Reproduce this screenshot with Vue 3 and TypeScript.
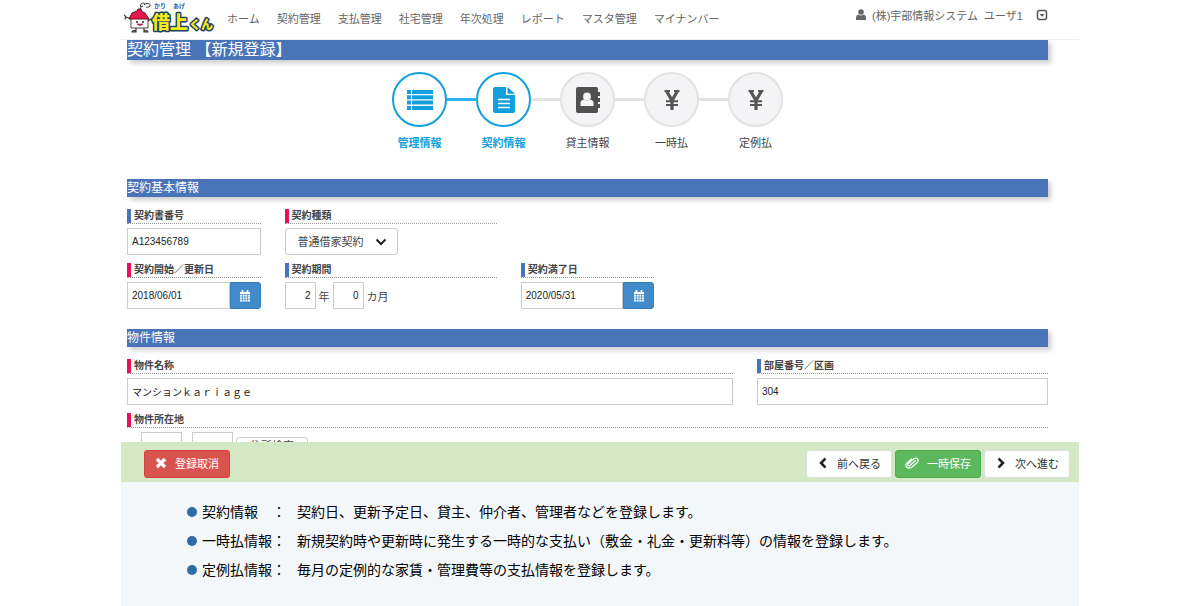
<script setup lang="ts">
import { ref } from 'vue'

interface Step {
  label: string
  icon: 'list' | 'file' | 'book' | 'yen'
  active: boolean
}

const menu: string[] = ['ホーム', '契約管理', '支払管理', '社宅管理', '年次処理', 'レポート', 'マスタ管理', 'マイナンバー']

const steps: Step[] = [
  { label: '管理情報', icon: 'list', active: true },
  { label: '契約情報', icon: 'file', active: true },
  { label: '貸主情報', icon: 'book', active: false },
  { label: '一時払', icon: 'yen', active: false },
  { label: '定例払', icon: 'yen', active: false },
]

const notes = [
  { term: '契約情報　：', text: '契約日、更新予定日、貸主、仲介者、管理者などを登録します。' },
  { term: '一時払情報：', text: '新規契約時や更新時に発生する一時的な支払い（敷金・礼金・更新料等）の情報を登録します。' },
  { term: '定例払情報：', text: '毎月の定例的な家賃・管理費等の支払情報を登録します。' },
]

const contractNo = ref('A123456789')
const contractType = ref('普通借家契約')
const startDate = ref('2018/06/01')
const years = ref('2')
const months = ref('0')
const endDate = ref('2020/05/31')
const propertyName = ref('マンションｋａｒｉａｇｅ')
const roomNo = ref('304')
const zipHead = ref('')
const zipTail = ref('')
</script>

<template>
  <div class="page">
    <div class="frame">
      <header class="header">
        <a href="#" class="logo" aria-label="借上くん">
          <svg width="92" height="34" viewBox="0 0 92 34">
            <path d="M17 6c-2-3 2-5 4-3M20 4c3-3 7-1 6 1s-4 1-4 1M19 5c-3 0-3 4-1 5" fill="none" stroke="#333" stroke-width="1" />
            <path d="M7 18L2 16M2 16l-2-2M2 16l-1 2M24 20l3-2" fill="none" stroke="#333" stroke-width="1.2" stroke-linecap="round" />
            <path d="M7 17h17v10H7z" fill="#fff" stroke="#444" stroke-width="1" />
            <path d="M5 18L8 12l5-2 1-2h3v2l4 2 4 6z" fill="#e5174f" stroke="#6b1020" stroke-width="1" />
            <circle cx="13" cy="21" r="1" fill="#222" />
            <circle cx="19" cy="21" r="1" fill="#222" />
            <path d="M13 23q3 3 6 0z" fill="#e5174f" stroke="#a01030" stroke-width=".6" />
            <path d="M12 27v3M20 27v3M8 31q0-2 4-1v1zM20 31v-1q4-1 4 1z" fill="#fff" stroke="#333" stroke-width="1.2" />
            <g class="logo-ruby">
              <text x="30" y="7">かり</text>
              <text x="49" y="7">あげ</text>
            </g>
            <g class="logo-word">
              <text x="28" y="28" font-size="18">借上</text>
              <text x="65" y="28" font-size="12">くん</text>
            </g>
          </svg>
        </a>
        <nav class="menu">
          <a v-for="item in menu" :key="item" href="#">{{ item }}</a>
        </nav>
        <div class="user">
          <svg width="10" height="12" viewBox="0 0 10 12"><circle cx="5" cy="3" r="2.8" fill="#666" /><path d="M0 11V8.500Q0 6 2.500 5.500Q5 7.500 7.500 5.500Q10 6 10 8.500V11z" fill="#666" /></svg>
          <span class="user-name">(株)宇部情報システム&nbsp; ユーザ1</span>
          <button type="button" class="user-toggle" aria-label="ユーザメニュー">
            <svg width="12" height="12" viewBox="0 0 12 12"><rect x="1.500" y="1.500" width="9" height="9" rx="2" fill="none" stroke="#555" stroke-width="1.500" /><path d="M3.500 5h5L6 7.800z" fill="#555" /></svg>
          </button>
        </div>
      </header>

      <main class="form">
        <h1 class="bar title">契約管理 【新規登録】</h1>

        <ol class="steps">
          <li v-for="step in steps" :key="step.label" class="step" :class="{ active: step.active }">
            <span class="disc">
              <svg v-if="step.icon === 'list'" width="26" height="20" viewBox="0 0 26 20" fill="#129fdc">
                <path d="M0 0h4v4H0zM5 0h21v4H5zM0 5.300h4v4H0zM5 5.300h21v4H5zM0 10.600h4v4H0zM5 10.600h21v4H5zM0 16h4v4H0zM5 16h21v4H5z" />
              </svg>
              <svg v-else-if="step.icon === 'file'" width="22" height="26" viewBox="0 0 22 26">
                <path d="M2 0h11v8h9v16q0 2-2 2H2q-2 0-2-2V2q0-2 2-2z" fill="#129fdc" />
                <path d="M14.500 0L22 6.800h-7.500z" fill="#129fdc" />
                <path d="M5 12.500h12M5 16.500h12M5 20.500h12" stroke="#fff" stroke-width="1.600" />
              </svg>
              <svg v-else-if="step.icon === 'book'" width="24" height="26" viewBox="0 0 24 26">
                <path d="M2 0h18q2 0 2 2v3h2v4h-2v2h2v4h-2v2h2v4h-2v3q0 2-2 2H2q-2 0-2-2V2q0-2 2-2z" fill="#505050" />
                <circle cx="11" cy="9.500" r="3.900" fill="#f4f4f7" />
                <path d="M4.500 19v-3q0-3 3.500-3.500Q11 14.500 14 12.500Q17.500 13 17.500 16v3z" fill="#f4f4f7" />
              </svg>
              <svg v-else width="16" height="20" viewBox="0 0 16 20">
                <path d="M2.500 1L8 10.500 13.500 1M8 10v10" fill="none" stroke="#555" stroke-width="3.200" />
                <path d="M2 11.300h12M2 15h12" stroke="#555" stroke-width="2" />
                <path d="M.5 1h5.500M10 1h5.500" stroke="#555" stroke-width="2" />
              </svg>
            </span>
            <span class="step-label">{{ step.label }}</span>
          </li>
        </ol>

        <section>
          <h2 class="bar">契約基本情報</h2>
          <div class="grid">
            <div class="field span2">
              <label for="contract-no">契約書番号</label>
              <input id="contract-no" v-model="contractNo" type="text" />
            </div>
            <div class="field span3 required">
              <label for="contract-type">契約種類</label>
              <div class="select">
                <select id="contract-type" v-model="contractType">
                  <option>普通借家契約</option>
                  <option>定期借家契約</option>
                </select>
                <svg width="12" height="8" viewBox="0 0 12 8"><path d="M1.500 1.500L6 6l4.500-4.500" fill="none" stroke="#222" stroke-width="2" /></svg>
              </div>
            </div>
            <div class="field span2 required first">
              <label for="start-date">契約開始／更新日</label>
              <div class="date">
                <input id="start-date" v-model="startDate" type="text" />
                <button type="button" aria-label="契約開始日を選択">
                  <svg width="12" height="12" viewBox="0 0 12 12"><path d="M1 2h10v9.500H1z" fill="#fff" /><path d="M3.500 0v3M8.500 0v3" stroke="#fff" stroke-width="1.800" /><path d="M1 4.500h10M1 7h10M1 9.300h10M3.500 4.500v7M6 4.500v7M8.500 4.500v7" stroke="#428bca" stroke-width=".7" /></svg>
                </button>
              </div>
            </div>
            <div class="field span3">
              <label for="years">契約期間</label>
              <div class="period">
                <input id="years" v-model="years" type="text" />
                <span>年</span>
                <input v-model="months" type="text" aria-label="契約期間の月数" />
                <span>カ月</span>
              </div>
            </div>
            <div class="field span2">
              <label for="end-date">契約満了日</label>
              <div class="date">
                <input id="end-date" v-model="endDate" type="text" />
                <button type="button" aria-label="契約満了日を選択">
                  <svg width="12" height="12" viewBox="0 0 12 12"><path d="M1 2h10v9.500H1z" fill="#fff" /><path d="M3.500 0v3M8.500 0v3" stroke="#fff" stroke-width="1.800" /><path d="M1 4.500h10M1 7h10M1 9.300h10M3.500 4.500v7M6 4.500v7M8.500 4.500v7" stroke="#428bca" stroke-width=".7" /></svg>
                </button>
              </div>
            </div>
          </div>
        </section>

        <section>
          <h2 class="bar">物件情報</h2>
          <div class="grid">
            <div class="field span8 required">
              <label for="property-name">物件名称</label>
              <input id="property-name" v-model="propertyName" type="text" />
            </div>
            <div class="field span4">
              <label for="room-no">部屋番号／区画</label>
              <input id="room-no" v-model="roomNo" type="text" />
            </div>
            <div class="field span12 required">
              <label for="zip-head">物件所在地</label>
              <div class="zip">
                <input id="zip-head" v-model="zipHead" type="text" />
                <input v-model="zipTail" type="text" aria-label="郵便番号の下4桁" />
                <button type="button">住所検索</button>
              </div>
            </div>
          </div>
        </section>
      </main>

      <div class="actions">
        <button type="button" class="btn danger">
          <svg width="12" height="12" viewBox="0 0 12 12"><path d="M2 2l8 8M10 2l-8 8" stroke="#fff" stroke-width="3.200" /></svg>
          登録取消
        </button>
        <div class="actions-right">
          <button type="button" class="btn">
            <svg width="12" height="12" viewBox="0 0 12 12"><path d="M8.500 1.500L4 6l4.500 4.500" fill="none" stroke="#222" stroke-width="2.500" /></svg>
            前へ戻る
          </button>
          <button type="button" class="btn success">
            <svg width="14" height="12" viewBox="0 0 14 12"><path d="M10.500 3.500L5 8.500q-1.500 1-2-.2t.8-2L8.500 2q2.500-1.800 4 0t-.5 3.800L7 10q-3 2-5 .5T1.500 6.500L6.500 2" fill="none" stroke="#fff" stroke-width="1.200" stroke-linecap="round" /></svg>
            一時保存
          </button>
          <button type="button" class="btn">
            <svg width="12" height="12" viewBox="0 0 12 12"><path d="M3.500 1.500L8 6l-4.500 4.500" fill="none" stroke="#222" stroke-width="2.500" /></svg>
            次へ進む
          </button>
        </div>
      </div>

      <ul class="notes">
        <li v-for="note in notes" :key="note.term">
          <span class="term">{{ note.term }}</span>
          <span>{{ note.text }}</span>
        </li>
      </ul>
    </div>
  </div>
</template>

<style>
body {
  margin: 0;
  background: #fff;
}
</style>

<style scoped>
* {
  box-sizing: border-box;
}

.page {
  height: 100vh;
  padding: 0 121px;
  background: #fff;
  color: #444;
  font-family: "Liberation Sans", "Noto Sans CJK JP", sans-serif;
  font-size: 11px;
}

.frame {
  display: flex;
  flex-direction: column;
  height: 100%;
}

a {
  color: inherit;
  text-decoration: none;
}

button,
input,
select {
  margin: 0;
  font-family: inherit;
  color: inherit;
}

svg {
  display: block;
  flex: none;
}

.header {
  display: flex;
  align-items: center;
  flex: none;
  height: 40px;
  padding: 0 31px 4px 3px;
  border-bottom: 1px solid #eee;
  color: #666;
}

.logo-ruby {
  font-size: 6px;
  font-weight: 700;
  fill: #2a5fa8;
}

.logo-word {
  font-weight: 900;
  fill: #f5ea1c;
  stroke: #1d3f66;
  stroke-width: 3px;
  stroke-linejoin: round;
  paint-order: stroke;
}

.menu {
  display: flex;
  gap: 17px;
  margin-left: 11px;
  white-space: nowrap;
}

.user {
  display: flex;
  align-items: center;
  margin-left: auto;
  padding-bottom: 6px;
  white-space: nowrap;
}

.user-name {
  margin: 0 13px 0 6px;
}

.user-toggle {
  padding: 0;
  border: 0;
  background: none;
}

.form {
  flex: 1;
  min-height: 0;
  overflow: hidden;
  padding: 0 31px 0 6px;
}

.bar {
  margin: 0;
  background: #4a74b8;
  color: #fff;
  font-size: 12px;
  font-weight: 400;
  line-height: 18px;
  box-shadow: 3px 3px 5px #ccc;
}

.title {
  font-size: 16px;
  line-height: 20px;
}

.steps {
  display: flex;
  justify-content: center;
  margin: 12px 0 28px;
  padding: 0;
  list-style: none;
}

.step {
  display: flex;
  flex-direction: column;
  align-items: center;
  gap: 8px;
  position: relative;
  width: 84px;
}

.step + .step::before {
  content: "";
  position: absolute;
  top: 26px;
  right: 69px;
  width: 30px;
  height: 3px;
  background: #e3e3e3;
}

.step.active + .step.active::before {
  background: #27b4ee;
}

.disc {
  display: flex;
  align-items: center;
  justify-content: center;
  width: 55px;
  height: 55px;
  border: 2px solid #e3e3e3;
  border-radius: 50%;
  background: #f4f4f7;
}

.active .disc {
  border-color: #129fdc;
  background: #fff;
}

.step-label {
  line-height: 16px;
}

.active .step-label {
  color: #129fdc;
  font-weight: 700;
}

.grid {
  display: grid;
  grid-template-columns: repeat(12, minmax(0, 1fr));
  gap: 8px 24px;
  padding: 12px 0 20px;
}

.span2 { grid-column-end: span 2; }
.span3 { grid-column-end: span 3; }
.span4 { grid-column-end: span 4; }
.span8 { grid-column-end: span 8; }
.span12 { grid-column-end: span 12; }
.first { grid-column-start: 1; }

.field label {
  display: block;
  position: relative;
  height: 15px;
  margin-bottom: 4px;
  padding-left: 7px;
  border-bottom: 1px dotted #999;
  font-size: 10px;
  font-weight: 700;
  line-height: 13px;
}

.field label::before {
  content: "";
  position: absolute;
  top: 0;
  left: 0;
  width: 4px;
  height: 14px;
  background: #4a74b8;
}

.required label::before {
  background: #ec0f58;
}

.field input {
  display: block;
  width: 100%;
  height: 27px;
  padding: 0 4px;
  border: 1px solid #ccc;
  border-radius: 0;
  background: #fff;
  font-size: 10px;
  color: #222;
}

.select {
  display: inline-block;
  position: relative;
  vertical-align: top;
}

.select select {
  display: block;
  height: 27px;
  padding: 0 33px 0 12px;
  border: 1px solid #ccc;
  border-radius: 3px;
  appearance: none;
  background: #fff;
  font-size: 11px;
}

.select svg {
  position: absolute;
  top: 10px;
  right: 11px;
  pointer-events: none;
}

.date {
  display: flex;
}

.date input {
  flex: 1;
  min-width: 0;
}

.date button {
  display: flex;
  align-items: center;
  justify-content: center;
  width: 31px;
  padding: 0;
  border: 1px solid #357ebd;
  border-radius: 0 3px 3px 0;
  background: #428bca;
}

.period {
  display: flex;
  align-items: center;
  gap: 3px;
}

.field .period input {
  width: 31px;
  text-align: right;
}

.zip {
  display: flex;
  align-items: flex-start;
  padding-left: 14px;
}

.field .zip input {
  width: 41px;
  margin-right: 10px;
}

.zip button {
  width: 72px;
  height: 18px;
  margin: 5px 0 0 -7px;
  padding: 0;
  border: 1px solid #ccc;
  border-radius: 3px;
  background: #fff;
  font-size: 11px;
  line-height: 14px;
}

.actions {
  display: flex;
  align-items: center;
  justify-content: space-between;
  flex: none;
  height: 40px;
  padding: 4px 9px 0 23px;
  background: #d5e8c5;
}

.actions-right {
  display: flex;
  gap: 3px;
}

.btn {
  display: flex;
  align-items: center;
  justify-content: center;
  gap: 8px;
  width: 86px;
  height: 28px;
  padding: 0 0 2px;
  border: 1px solid #ddd;
  border-radius: 3px;
  background: #fff;
  color: #333;
  font-size: 11px;
  white-space: nowrap;
}

.danger {
  border-color: #d43f3a;
  background: #d9534f;
  color: #fff;
}

.success {
  border-color: #4cae4c;
  background: #5cb85c;
  color: #fff;
}

.notes {
  flex: none;
  margin: 0;
  padding: 15px 66px 22px;
  background: #f3f7f9;
  color: #000;
  font-family: "Noto Sans CJK JP", sans-serif;
  font-size: 14px;
  line-height: 29px;
  list-style: none;
}

.notes li {
  display: flex;
  align-items: center;
}

.notes li::before {
  content: "";
  width: 10px;
  height: 10px;
  margin-right: 5px;
  border-radius: 50%;
  background: #2d6ca5;
}

.term {
  width: 95px;
}
</style>
